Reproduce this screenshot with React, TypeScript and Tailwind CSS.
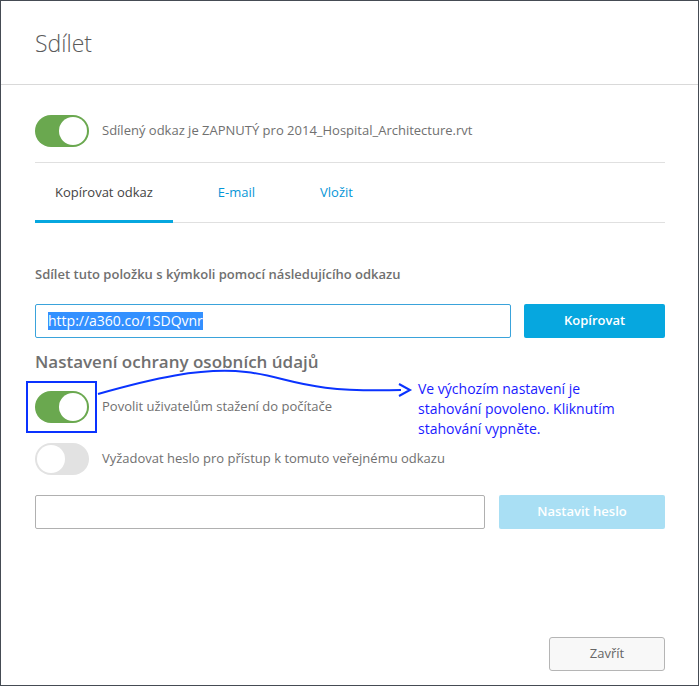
import React from "react";

const font = { fontFamily: '"Open Sans", "Noto Sans", sans-serif' };

// Toggle switch, green when on, grey when off
const Toggle = ({ on }: { on: boolean }) => (
  <div
    className={
      "relative h-[32px] w-[54px] shrink-0 rounded-full " +
      (on ? "bg-[#6aa84f]" : "bg-[#e2e2e2]")
    }
  >
    <div
      className={
        "absolute top-[2px] h-[28px] w-[28px] rounded-full bg-white " +
        (on ? "right-[2px]" : "left-[2px]")
      }
    />
  </div>
);

const ToggleRow = ({ on, label }: { on: boolean; label: string }) => (
  <div className="flex items-center gap-[13px]">
    <Toggle on={on} />
    <span className="text-[13px] text-[#707070]">{label}</span>
  </div>
);

export default function App() {
  return (
    <div
      style={font}
      className="relative flex h-[686px] w-[699px] flex-col border border-[#454b53] bg-white"
    >
      {/* header */}
      <div className="flex h-[84px] shrink-0 items-center border-b border-[#d9d9d9] px-[34px]">
        <h1 className="pt-[2px] text-[23px] font-light text-[#5a5a5a]">Sdílet</h1>
      </div>

      <div className="flex flex-1 flex-col pl-[34px] pr-[33px]">
        <div className="mt-[30px]">
          <ToggleRow on label="Sdílený odkaz je ZAPNUTÝ pro 2014_Hospital_Architecture.rvt" />
        </div>

        <div className="mt-[15px] border-t border-[#e0e0e0]" />

        {/* tabs */}
        <div className="flex h-[60px] gap-[25px] border-b border-[#e0e0e0]">
          <div className="-mb-px flex items-center border-b-[3px] border-[#06a7df] px-[20px] pt-[3px] text-[13px] text-[#444]">
            Kopírovat odkaz
          </div>
          <div className="flex items-center px-[20px] text-[13px] text-[#0696d7]">E-mail</div>
          <div className="flex items-center px-[20px] text-[13px] text-[#0696d7]">Vložit</div>
        </div>

        <p className="mt-[41px] text-[13px] font-semibold leading-[20px] text-[#707070]">
          Sdílet tuto položku s kýmkoli pomocí následujícího odkazu
        </p>

        <div className="mt-[20px] flex gap-[13px]">
          <div className="flex h-[34px] flex-1 items-center rounded-[2px] border border-[#3aa3db] px-[12px]">
            <span className="bg-[#3390ff] text-[14px] leading-[18px] text-white">
              http://a360.co/1SDQvnr
            </span>
          </div>
          <button className="h-[34px] w-[141px] rounded-[2px] bg-[#06a7df] text-[13px] font-semibold text-white">
            Kopírovat
          </button>
        </div>

        <h2 className="mt-[12px] text-[17px] font-semibold leading-[24px] text-[#707070]">
          Nastavení ochrany osobních údajů
        </h2>

        <div className="mt-[17px]">
          <ToggleRow on label="Povolit uživatelům stažení do počítače" />
        </div>
        <div className="mt-[20px]">
          <ToggleRow on={false} label="Vyžadovat heslo pro přístup k tomuto veřejnému odkazu" />
        </div>

        <div className="mt-[20px] flex gap-[14px]">
          <div className="h-[34px] flex-1 rounded-[2px] border border-[#b0b0b0]" />
          <button className="h-[34px] w-[166px] rounded-[2px] bg-[#a9dff4] text-[13px] font-semibold text-white">
            Nastavit heslo
          </button>
        </div>

        <div className="mt-auto mb-[14px] flex justify-end">
          <button className="h-[34px] w-[116px] rounded-[3px] border border-[#b5b5b5] bg-[#f8f8f8] text-[13px] text-[#666]">
            Zavřít
          </button>
        </div>
      </div>

      {/* annotation overlay */}
      <div className="absolute left-[25px] top-[380px] h-[52px] w-[71px] border-2 border-[#0a33ff]" />
      <svg
        className="absolute left-0 top-0"
        width="699"
        height="686"
        viewBox="0 0 699 686"
        fill="none"
      >
        <path
          d="M97 393 C 150 378, 200 366, 245 371 C 290 376, 300 392, 400 389"
          stroke="#0a33ff"
          strokeWidth="2"
        />
        <path d="M398 383 L409 389 L398 395" stroke="#0a33ff" strokeWidth="2" />
      </svg>
      <div className="absolute left-[417px] top-[378px] w-[240px] text-[14px] leading-[20px] text-[#1a1aff]">
        Ve výchozím nastavení je
        <br />
        stahování povoleno. Kliknutím
        <br />
        stahování vypněte.
      </div>
    </div>
  );
}
